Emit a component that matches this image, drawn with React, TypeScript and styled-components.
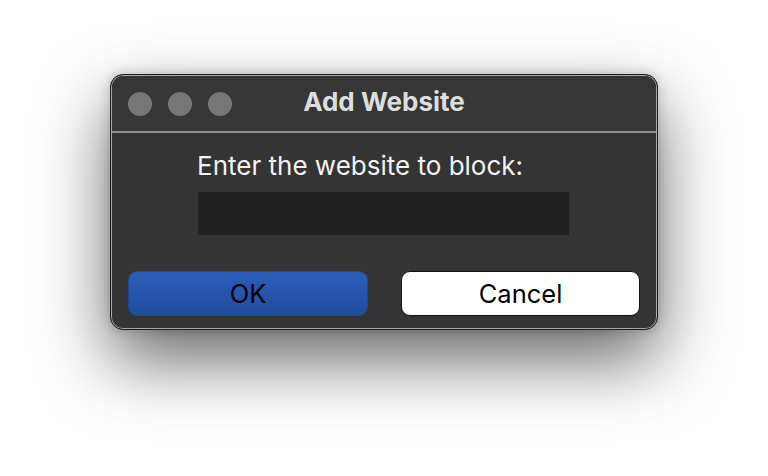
import React from "react";
import styled, { createGlobalStyle } from "styled-components";

const Global = createGlobalStyle`
  html, body { margin: 0; padding: 0; background: #ffffff; }
  body { font-family: Inter, "Liberation Sans", Arial, sans-serif; }
`;

const Page = styled.div`
  width: 768px;
  height: 476px;
  display: flex;
  justify-content: center;
  align-items: flex-start;
  padding-top: 74px;
  box-sizing: border-box;
  background: #ffffff;
`;

const Window = styled.div`
  width: 548px;
  height: 256px;
  box-sizing: border-box;
  border-radius: 13px;
  border: 1px solid #1c1c1c;
  box-shadow: inset 0 0 0 1px #a8a8a8, 0 30px 70px rgba(0, 0, 0, 0.6),
    0 0 12px rgba(0, 0, 0, 0.2);
  background: #343434;
  display: flex;
  flex-direction: column;
  overflow: hidden;
`;

const TitleBar = styled.div`
  height: 57px;
  flex: none;
  position: relative;
  display: flex;
  align-items: center;
  justify-content: center;
  box-sizing: border-box;
  padding-bottom: 3px;
  background: #363636;
  border-bottom: 2px solid #8e8e8e;
  margin: 1px 1px 0 1px;
  border-radius: 12px 12px 0 0;
`;

const Lights = styled.div`
  position: absolute;
  left: 16px;
  top: 16px;
  display: flex;
  gap: 16px;
`;

const Light = styled.span`
  width: 24px;
  height: 24px;
  border-radius: 50%;
  background: #767676;
`;

const Title = styled.div`
  color: #dddddd;
  font-weight: 700;
  font-size: 26px;
  line-height: 30px;
`;

const Body = styled.div`
  flex: 1;
  display: flex;
  flex-direction: column;
  padding: 18px 17px 0 17px;
`;

const Prompt = styled.div`
  margin-left: 69px;
  color: #f2f2f2;
  font-size: 26px;
  line-height: 30px;
`;

const Input = styled.div`
  margin: 10px 0 0 69px;
  width: 373px;
  height: 45px;
  box-sizing: border-box;
  background: #212121;
  border: 1px solid #26364f;
`;

const Buttons = styled.div`
  display: flex;
  justify-content: space-between;
  margin-top: 35px;
`;

const Button = styled.div<{ $primary?: boolean }>`
  width: ${(p) => (p.$primary ? "240px" : "239px")};
  height: 45px;
  box-sizing: border-box;
  border-radius: 9px;
  display: flex;
  align-items: center;
  justify-content: center;
  font-size: 25.5px;
  color: #000;
  background: ${(p) =>
    p.$primary ? "linear-gradient(#2a5dbb, #224d9e)" : "#ffffff"};
  border: ${(p) => (p.$primary ? "1px solid #23468c" : "1.5px solid #141414")};
`;

export default function App() {
  return (
    <>
      <Global />
      <Page>
        <Window>
          <TitleBar>
            <Lights>
              <Light />
              <Light />
              <Light />
            </Lights>
            <Title>Add Website</Title>
          </TitleBar>
          <Body>
            <Prompt>Enter the website to block:</Prompt>
            <Input />
            <Buttons>
              <Button $primary>OK</Button>
              <Button>Cancel</Button>
            </Buttons>
          </Body>
        </Window>
      </Page>
    </>
  );
}
